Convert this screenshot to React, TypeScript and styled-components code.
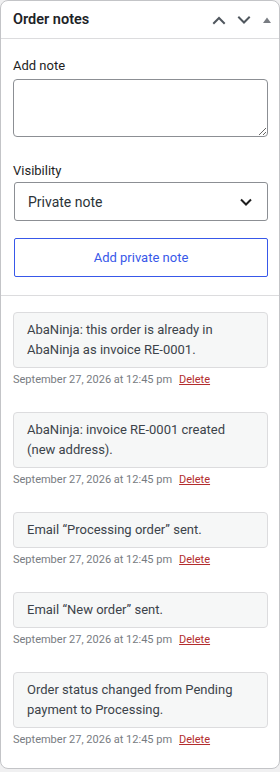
import React from "react";
import styled, { createGlobalStyle } from "styled-components";

const GlobalStyle = createGlobalStyle`
  html, body {
    margin: 0;
    padding: 0;
    background: #f0f0f1;
    font-family: Roboto, "Noto Sans", "Liberation Sans", sans-serif;
    color: #1e1e1e;
  }
  * { box-sizing: border-box; }
`;

type Note = { text: string; date: string };

const notes: Note[] = [
  { text: "AbaNinja: this order is already in AbaNinja as invoice RE-0001.", date: "September 27, 2026 at 12:45 pm" },
  { text: "AbaNinja: invoice RE-0001 created (new address).", date: "September 27, 2026 at 12:45 pm" },
  { text: "Email \u201cProcessing order\u201d sent.", date: "September 27, 2026 at 12:45 pm" },
  { text: "Email \u201cNew order\u201d sent.", date: "September 27, 2026 at 12:45 pm" },
  { text: "Order status changed from Pending payment to Processing.", date: "September 27, 2026 at 12:45 pm" },
];

const Chevron = ({ up }: { up?: boolean }) => (
  <svg width="14" height="14" viewBox="0 0 14 14" fill="none">
    <path
      d={up ? "M2 10 L7 5 L12 10" : "M2 4.5 L7 9.5 L12 4.5"}
      stroke="#50575e"
      strokeWidth="2"
      strokeLinecap="square"
    />
  </svg>
);

export default function App() {
  return (
    <>
      <GlobalStyle />
      <Panel>
        <Header>
          <Title>Order notes</Title>
          <HeaderActions>
            <IconButton><Chevron up /></IconButton>
            <IconButton><Chevron /></IconButton>
            <Toggle>
              <svg width="10" height="8" viewBox="0 0 10 8">
                <path d="M1 7 L5 1.5 L9 7 Z" fill="#787c82" />
              </svg>
            </Toggle>
          </HeaderActions>
        </Header>
        <Form>
          <Label $bottom={3}>Add note</Label>
          <TextArea />
          <Label $top={24} $bottom={1}>Visibility</Label>
          <Select>
            <span>Private note</span>
            <svg width="16" height="16" viewBox="0 0 16 16" fill="none">
              <path d="M3 5.5 L8 10.5 L13 5.5" stroke="#1e1e1e" strokeWidth="2" />
            </svg>
          </Select>
          <AddButton>Add private note</AddButton>
        </Form>
        <NoteList>
          {notes.map((n, i) => (
            <NoteItem key={i}>
              <NoteBox>{n.text}</NoteBox>
              <Meta>
                {n.date}
                <DeleteLink href="#">Delete</DeleteLink>
              </Meta>
            </NoteItem>
          ))}
        </NoteList>
      </Panel>
    </>
  );
}

const Panel = styled.div`
  width: 280px;
  background: #fff;
  border: 1px solid #c3c4c7;
  border-radius: 8px;
  overflow: hidden;
`;

const Header = styled.div`
  display: flex;
  align-items: center;
  justify-content: space-between;
  height: 38px;
  padding: 0 0 0 12px;
  border-bottom: 1px solid #dcdcde;
`;

const Title = styled.h2`
  margin: 0;
  font-size: 14.5px;
  font-weight: 600;
  color: #1d2327;
`;

const HeaderActions = styled.div`
  display: flex;
  align-items: center;
  padding-right: 1px;
`;

const IconButton = styled.span`
  display: flex;
  align-items: center;
  justify-content: center;
  width: 25px;
  height: 36px;
`;

const Toggle = styled.span`
  display: flex;
  align-items: center;
  justify-content: center;
  width: 22px;
  height: 36px;
`;

const Form = styled.div`
  display: flex;
  flex-direction: column;
  padding: 17px 11px 18px 12px;
  border-bottom: 1px solid #dcdcde;
`;

const Label = styled.label<{ $top?: number; $bottom?: number }>`
  font-size: 13px;
  line-height: 20px;
  color: #1e1e1e;
  margin-top: ${(p) => p.$top ?? 0}px;
  margin-bottom: ${(p) => p.$bottom ?? 4}px;
`;

const TextArea = styled.textarea`
  display: block;
  width: 100%;
  height: 58px;
  border: 1px solid #8c8f94;
  border-radius: 4px;
  font-family: inherit;
  font-size: 13px;
  resize: vertical;
`;

const Select = styled.div`
  display: flex;
  align-items: center;
  justify-content: space-between;
  height: 39px;
  margin-left: 1px;
  padding: 0 13px 0 13px;
  border: 1px solid #8c8f94;
  border-radius: 3px;
  font-size: 14px;
  color: #2c3338;
`;

const AddButton = styled.button`
  margin-top: 17px;
  margin-left: 1px;
  height: 39px;
  background: #fff;
  border: 1px solid #3858e9;
  border-radius: 2px;
  color: #3858e9;
  font-family: inherit;
  font-size: 13px;
  cursor: pointer;
`;

const NoteList = styled.ul`
  list-style: none;
  margin: 0;
  padding: 16px 11px 20px 12px;
  display: flex;
  flex-direction: column;
  gap: 24px;
`;

const NoteItem = styled.li`
  display: flex;
  flex-direction: column;
`;

const NoteBox = styled.div`
  background: #f6f7f7;
  border: 1px solid #dcdcde;
  border-radius: 4px;
  padding: 7px 13px;
  font-size: 13px;
  line-height: 20px;
  color: #3c434a;
`;

const Meta = styled.div`
  margin-top: 4px;
  font-size: 11px;
  line-height: 16px;
  color: #787c82;
`;

const DeleteLink = styled.a`
  margin-left: 7px;
  color: #b32d2e;
  text-decoration: underline;
`;
